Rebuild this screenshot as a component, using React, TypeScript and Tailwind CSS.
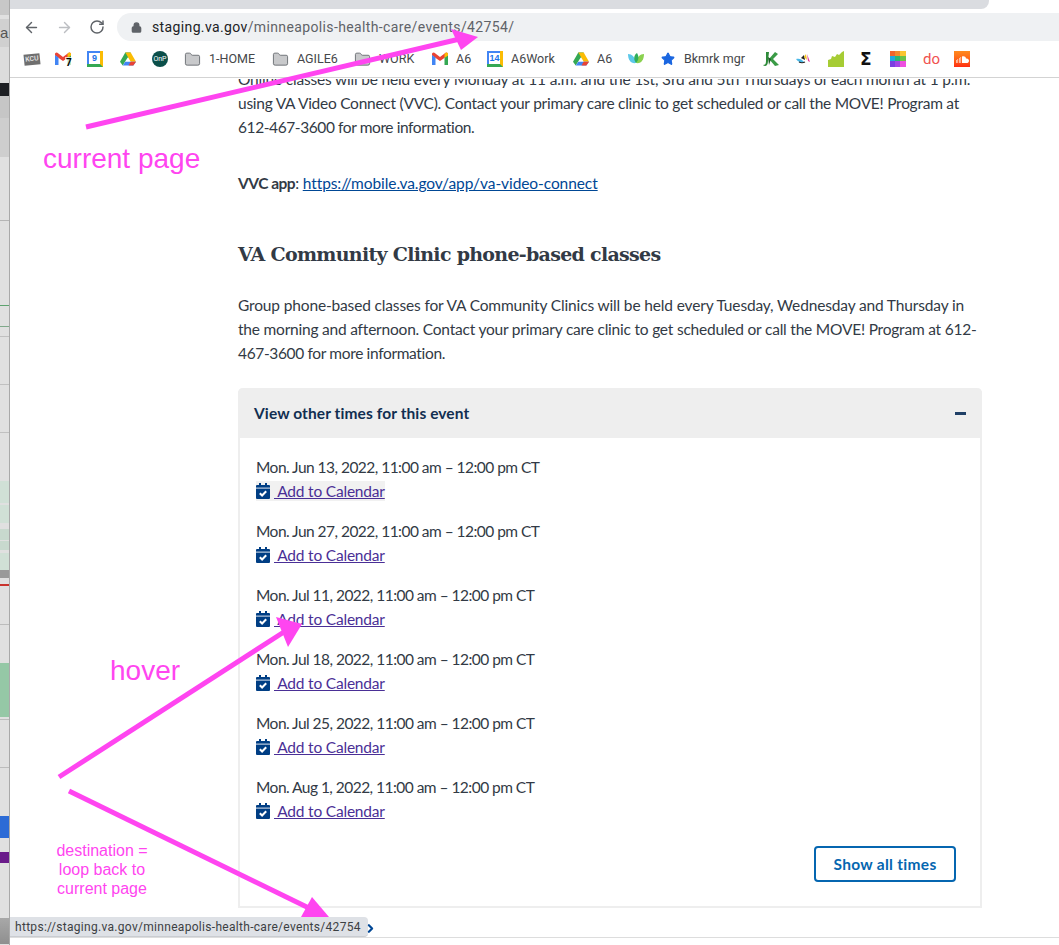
import { ArrowLeft, ArrowRight, RotateCw, Lock, Folder, ChevronRight, Star } from 'lucide-react'

const TIMES = [
  'Mon. Jun 13, 2022, 11:00 am – 12:00 pm CT',
  'Mon. Jun 27, 2022, 11:00 am – 12:00 pm CT',
  'Mon. Jul 11, 2022, 11:00 am – 12:00 pm CT',
  'Mon. Jul 18, 2022, 11:00 am – 12:00 pm CT',
  'Mon. Jul 25, 2022, 11:00 am – 12:00 pm CT',
  'Mon. Aug 1, 2022, 11:00 am – 12:00 pm CT',
]

function CalendarCheck() {
  return (
    <svg width="14" height="16" viewBox="0 0 14 16" className="shrink-0">
      <path d="M0 3a1 1 0 0 1 1-1h2V0h2v2h4V0h2v2h2a1 1 0 0 1 1 1v12a1 1 0 0 1-1 1H1a1 1 0 0 1-1-1z" fill="#003e84" />
      <rect x="0" y="4.600" width="14" height="1" fill="#dfe6f0" />
      <path d="M3.800 10.200l2.300 2.300 4.100-4.300" fill="none" stroke="#fff" strokeWidth="2" />
    </svg>
  )
}

function Fav({ children }: { children: React.ReactNode }) {
  return (
    <svg width="16" height="16" viewBox="0 0 16 16" className="shrink-0">
      {children}
    </svg>
  )
}

const Gmail = () => (
  <Fav>
    <path d="M0 4.500L8 10l8-5.500V3a1.500 1.500 0 0 0-2.400-1.200L8 6 2.400 1.800A1.500 1.500 0 0 0 0 3z" fill="#ea4335" />
    <path d="M0 4v10h3.500V6.500z" fill="#4285f4" />
    <path d="M16 4v10h-3.500V6.500z" fill="#34a853" />
    <path d="M12.500 3.100l1.100-1.300A1.500 1.500 0 0 1 16 3v1.500l-3.500 2.500z" fill="#fbbc04" />
  </Fav>
)

const Drive = () => (
  <Fav>
    <path d="M5.300 1.500h5.400L8 7 5.300 3z" fill="#0f9d58" />
    <path d="M5.300 1.500L0 10.800l2.700 3.700L8 6z" fill="#34a853" />
    <path d="M10.700 1.500L16 10.800h-5.300L5.300 1.500z" fill="#fbbc04" />
    <path d="M2.700 14.500h10.600l2.700-3.700H5.300z" fill="#4285f4" />
    <path d="M10.700 10.800H16l-2.700 3.700H8.500z" fill="#ea4335" />
  </Fav>
)

const Cal = ({ n }: { n: string }) => (
  <span className="w-4 h-4 shrink-0 bg-[#4285f4] border-r-[3px] border-r-[#fbbc04] border-b-[3px] border-b-[#34a853] flex items-center justify-center p-[2px] pr-0 pb-0">
    <span className="w-full h-full bg-white text-[#1a73e8] text-[9px] font-bold leading-[11px] text-center font-['Liberation_Sans',sans-serif]">{n}</span>
  </span>
)

function Bookmark({ label, children, className }: { label?: string; children: React.ReactNode; className?: string }) {
  return (
    <div className={`flex items-center gap-2 shrink-0 ${className ?? ''}`}>
      {children}
      {label && <span className="text-[12.500px] text-[#45474a] whitespace-nowrap">{label}</span>}
    </div>
  )
}

const FolderIcon = () => <Folder size={17} strokeWidth={1.2} className="text-[#5f6368] fill-[#c8c9cb] shrink-0" />

function BookmarksBar() {
  return (
    <div className="h-9 flex items-center pl-[14px] border-b border-[#d3d3d3] font-['Roboto',sans-serif] box-content">
      <Bookmark className="w-[31px]">
        <span className="w-4 h-[11px] bg-[#6f6f6f] text-[7px] leading-[11px] text-[#ddd] text-center font-bold -rotate-6">KCU</span>
      </Bookmark>
      <Bookmark className="w-[32px] relative">
        <Gmail />
        <span className="absolute left-[10px] top-[6px] text-[10px] leading-3 font-bold text-black bg-white/70 px-px">7</span>
      </Bookmark>
      <Bookmark className="w-[33px]"><Cal n="9" /></Bookmark>
      <Bookmark className="w-[32px]"><Drive /></Bookmark>
      <Bookmark className="w-[32px]">
        <span className="w-4 h-4 rounded-full bg-[#0b4f4a] text-white text-[7px] leading-4 text-center">OnP</span>
      </Bookmark>
      <Bookmark label="1-HOME" className="w-[88px]"><FolderIcon /></Bookmark>
      <Bookmark label="AGILE6" className="w-[82px]"><FolderIcon /></Bookmark>
      <Bookmark label="WORK" className="w-[78px]"><FolderIcon /></Bookmark>
      <Bookmark label="A6" className="w-[55px]"><Gmail /></Bookmark>
      <Bookmark label="A6Work" className="w-[86px]"><Cal n="14" /></Bookmark>
      <Bookmark label="A6" className="w-[55px]"><Drive /></Bookmark>
      <Bookmark className="w-[32px]">
        <Fav>
          <path d="M0 3c4 0 7 3 8 9-5 1-8-3-8-9z" fill="#5cc8ea" />
          <path d="M16 3c-4 0-7 3-8 9 5 1 8-3 8-9z" fill="#8ad14f" />
          <path d="M8 12C5 8 6 4 9 2c2 3 2 7-1 10z" fill="#2fae5c" />
        </Fav>
      </Bookmark>
      <Bookmark label="Bkmrk mgr" className="w-[103px] gap-[9px]">
        <Star size={14} className="text-[#1a66e0] fill-[#1a66e0] shrink-0 ml-px" />
      </Bookmark>
      <Bookmark className="w-[32px]">
        <Fav>
          <path d="M3 1h3l-1 9c0 5-3 6-5 4 2 0 3-1 3-4z" fill="#2e8b3a" />
          <path d="M6 8l6-7 3 2-5 5 6 6-4 1z" fill="#3a9b46" />
          <path d="M5 6l3 2-2 6z" fill="#1a5c22" />
        </Fav>
      </Bookmark>
      <Bookmark className="w-[33px]">
        <Fav>
          <path d="M1 8c3-1 6 0 8 3-3 1-6 0-8-3z" fill="#4ab8e8" />
          <path d="M4 11c2 1 4 1 6 0" stroke="#222" strokeWidth="1.200" fill="none" />
          <path d="M6 7l3-3 1 5z" fill="#222" />
          <path d="M9 6l2-3 1 6z" fill="#f5c518" />
          <path d="M12 3l3 8-2-1z" fill="#e6399b" />
        </Fav>
      </Bookmark>
      <Bookmark className="w-[32px]">
        <Fav><path d="M0 16V9l3-1 1-3 3 1 2-3 2 1 3-3 2-1v16z" fill="#a6cc34" /></Fav>
      </Bookmark>
      <Bookmark className="w-[30px]">
        <span className="text-[17px] font-bold text-[#111] leading-4 font-['DejaVu_Sans',sans-serif]">Σ</span>
      </Bookmark>
      <Bookmark className="w-[33px]">
        <Fav>
          <rect width="6" height="6" fill="#f0642e" /><rect x="5" width="6" height="6" fill="#f28a2e" /><rect x="10" width="6" height="6" fill="#fbc531" />
          <rect y="5" width="6" height="6" fill="#1fa8e0" /><rect x="5" y="5" width="6" height="6" fill="#2bb673" /><rect x="10" y="5" width="6" height="6" fill="#6bc24a" />
          <rect y="10" width="6" height="6" fill="#7a3fe0" /><rect x="5" y="10" width="6" height="6" fill="#a345e6" /><rect x="10" y="10" width="6" height="6" fill="#ee4fe0" />
        </Fav>
      </Bookmark>
      <Bookmark className="w-[31px]">
        <span className="text-[15px] text-[#f0524f] leading-4">do</span>
      </Bookmark>
      <Bookmark>
        <span className="w-4 h-4 bg-gradient-to-b from-[#ff8a1e] to-[#ff2a12] flex items-center justify-center">
          <svg width="13" height="7" viewBox="0 0 13 7"><path d="M0 7V4h.6v3zM1.500 7V3h.6v4zM3 7V2h.6v5zM4.500 7V1h.6v6zM6 7V.6C7.600-.400 9.800.4 10 2.500c1.600-.5 3 .7 3 2.200S11.800 7 10.800 7z" fill="#fff" /></svg>
        </span>
      </Bookmark>
    </div>
  )
}

function Toolbar() {
  return (
    <div className="h-7 flex items-center pt-[4px] box-content">
      <div className="flex items-center gap-4 pl-[13px] w-[107px] shrink-0">
        <ArrowLeft size={17} strokeWidth={2} className="text-[#5f6368]" />
        <ArrowRight size={17} strokeWidth={2} className="text-[#bcbec2]" />
        <RotateCw size={16} strokeWidth={2.2} className="text-[#5f6368]" />
      </div>
      <div className="flex-1 h-7 bg-[#eff1f3] rounded-l-[14px] flex items-center pl-[14px] text-[14px] font-['Roboto',sans-serif] tracking-[0.37px]">
        <Lock size={11} strokeWidth={3} className="text-[#5f6368] fill-[#5f6368] mr-[10px]" />
        <span className="text-[#202124]">staging.va.gov</span>
        <span className="text-[#5f6368]">/minneapolis-health-care/events/42754/</span>
      </div>
    </div>
  )
}

function EventTimes() {
  return (
    <div className="w-[744px] rounded-t-[5px] border-x-2 border-b-2 border-[#eeeeee]">
      <div className="h-[50px] -mx-[2px] bg-[#eeeeee] rounded-t-[5px] flex items-center justify-between pl-[16px] pr-[16px]">
        <span className="font-bold text-[#112e51] text-[15.500px] tracking-[0.1px]">View other times for this event</span>
        <span className="w-[11px] h-[3px] bg-[#1f3f66]" />
      </div>
      <div className="px-[16px] pt-[17px] pb-[24px]">
        <div className="flex flex-col gap-4">
          {TIMES.map((t, i) => (
            <div key={t} className="flex flex-col">
              <span className="leading-6 text-[#323a45] text-[15.500px] tracking-[-0.53px]">{t}</span>
              <a className={`flex items-center h-6 w-fit text-[#4a2f96] text-[15.500px] tracking-[-0.2px] ${i === 0 ? 'bg-[linear-gradient(transparent_2px,#f1f1f1_2px,#f1f1f1_22px,transparent_22px)]' : ''}`}>
                <CalendarCheck />
                <span className="underline pl-[4px] whitespace-pre"> Add to Calendar</span>
              </a>
            </div>
          ))}
        </div>
        <div className="flex justify-end mt-[23px] pr-[8px]">
          <button className="w-[142px] h-9 rounded-[4px] border-2 border-[#0566b0] text-[#0566b0] font-bold text-[15.500px] tracking-[0.3px]">
            Show all times
          </button>
        </div>
      </div>
    </div>
  )
}

function Content() {
  return (
    <div className="flex-1 overflow-hidden pl-[228px] text-[15.500px] text-[#323a45] mt-px">
      <div className="w-[760px] -mt-[12px] leading-6 tracking-[-0.15px]">
        <p className="whitespace-nowrap">
          <span className="tracking-[-0.19px]">Online classes will be held every Monday at 11 a.m. and the 1st, 3rd and 5th Thursdays of each month at 1 p.m.</span>
          <br />
          <span className="tracking-[-0.26px]">using VA Video Connect (VVC). Contact your primary care clinic to get scheduled or call the MOVE! Program at</span>
          <br />
          <span className="tracking-[-0.41px]">612-467-3600 for more information.</span>
        </p>
        <p className="mt-8">
          <b className="tracking-[-0.5px]">VVC app</b>: <a className="text-[#004795] underline tracking-[-0.08px]">https://mobile.va.gov/app/va-video-connect</a>
        </p>
        <h2 className="mt-[45px] text-[19px] font-bold text-[#323a45] leading-7 font-['DejaVu_Serif',serif] tracking-[-0.7px]">
          VA Community Clinic phone-based classes
        </h2>
        <p className="mt-[25px] whitespace-nowrap">
          Group phone-based classes for VA Community Clinics will be held every Tuesday, Wednesday and Thursday in
          <br />
          <span className="tracking-[-0.21px]">the morning and afternoon. Contact your primary care clinic to get scheduled or call the MOVE! Program at 612-</span>
          <br />
          <span className="tracking-[-0.35px]">467-3600 for more information.</span>
        </p>
        <div className="mt-[23px] tracking-normal">
          <EventTimes />
        </div>
      </div>
    </div>
  )
}

function Annotations() {
  const label = "absolute text-[#ff45f0] font-['Liberation_Sans',sans-serif]"
  return (
    <div className="absolute inset-0 pointer-events-none">
      <svg width="1059" height="945" className="absolute inset-0">
        <path d="M86 127L464 38" stroke="#ff45f0" strokeWidth="5" />
        <path d="M451 29L478 37 L461 50z" fill="#ff45f0" />
        <path d="M59 777L287 630" stroke="#ff45f0" strokeWidth="5" />
        <path d="M276 617L302 624L288 647z" fill="#ff45f0" />
        <path d="M69 791L315 911" stroke="#ff45f0" strokeWidth="5" />
        <path d="M312 897L329 917L301 917z" fill="#ff45f0" />
      </svg>
      <span className={`${label} left-[43px] top-[143px] text-[28px] leading-8`}>current page</span>
      <span className={`${label} left-[110px] top-[655px] text-[28px] leading-8`}>hover</span>
      <div className={`${label} left-[43px] top-[841px] w-[118px] text-center text-[16px] leading-[19px]`}>
        destination =<br />loop back to<br />current page
      </div>
    </div>
  )
}

// strip of the window behind the browser
function BackWindow() {
  return (
    <div className="w-[10px] shrink-0 overflow-hidden bg-[#e0e0e0] border-r border-[#a9a9a9] flex flex-col">
      <div className="h-[15px] shrink-0 bg-[#c8c8c8]" />
      <div className="h-1 shrink-0" />
      <div className="h-7 shrink-0 bg-[#d0d0d0] text-[#555] text-[15px] leading-7 font-['Liberation_Sans',sans-serif]">a</div>
      <div className="h-9 shrink-0 bg-[#dcdcdc]" />
      <div className="h-[13px] shrink-0 bg-[#1e2024]" />
      <div className="h-[22px] shrink-0 bg-[#c6c6c6]" />
      <div className="h-[39px] shrink-0 bg-[#cecece]" />
      <div className="h-16 shrink-0 border-b border-[#b5b5b5]" />
      <div className="h-[85px] shrink-0 border-b border-[#5da36f]" />
      <div className="h-[21px] shrink-0 border-b border-[#7fa98a]" />
      <div className="h-[10px] shrink-0 border-b border-[#c0c0c0]" />
      <div className="h-[48px] shrink-0 border-b border-[#c0c0c0]" />
      <div className="h-[48px] shrink-0 border-b border-[#c0c0c0]" />
      <div className="h-[48px] shrink-0" />
      <div className="h-[22px] shrink-0 bg-[#d0e0d6] mb-[2px]" />
      <div className="h-[18px] shrink-0 bg-[#d0e0d6] mb-[6px]" />
      <div className="h-[11px] shrink-0 bg-[#c8d9ce] mb-px" />
      <div className="h-[9px] shrink-0 bg-[#c8d9ce] mb-[3px]" />
      <div className="h-[17px] shrink-0 bg-[#d0e0d6]" />
      <div className="h-[8px] shrink-0 bg-[#999999]" />
      <div className="h-[6px] shrink-0" />
      <div className="h-[2px] shrink-0 bg-[#c9332e]" />
      <div className="h-[39px] shrink-0 border-b border-[#bcbcbc]" />
      <div className="h-[38px] shrink-0" />
      <div className="h-[54px] shrink-0 bg-[#95c8a6]" />
      <div className="h-[3px] shrink-0 border-b border-[#bcbcbc]" />
      <div className="h-[48px] shrink-0 border-b border-[#bcbcbc]" />
      <div className="h-[48px] shrink-0" />
      <div className="h-[22px] shrink-0 bg-[#2c6bd6]" />
      <div className="h-[14px] shrink-0" />
      <div className="h-[11px] shrink-0 bg-[#6a1b8a]" />
      <div className="h-[55px] shrink-0" />
      <div className="h-[26px] shrink-0 bg-gradient-to-b from-[#a8a8a8] to-[#8f8f8f]" />
    </div>
  )
}

export default function App() {
  return (
    <div className="relative w-[1059px] h-[945px] overflow-hidden bg-white flex font-['Lato','Noto_Sans',sans-serif]">
      <BackWindow />
      <div className="flex-1 min-w-0 flex flex-col">
        <div className="h-[9px] w-[979px] shrink-0 bg-[#dadce0] rounded-br-lg" />
        <Toolbar />
        <BookmarksBar />
        <Content />
      </div>
      <div className="absolute left-[10px] top-[917px] h-[20px] w-[358px] bg-[#dee1e6] rounded-r-[4px] border-b border-[#c9ccd1] flex items-center pl-[5px] text-[12px] text-[#3c4043] font-['Roboto',sans-serif] tracking-[0.3px] whitespace-nowrap">
        https://staging.va.gov/minneapolis-health-care/events/42754
      </div>
      <ChevronRight size={13} strokeWidth={4} className="absolute left-[364px] top-[922px] text-[#004795]" />
      <div className="absolute left-[10px] right-0 top-[937px] h-px bg-[#dddddd]" />
      <Annotations />
    </div>
  )
}
